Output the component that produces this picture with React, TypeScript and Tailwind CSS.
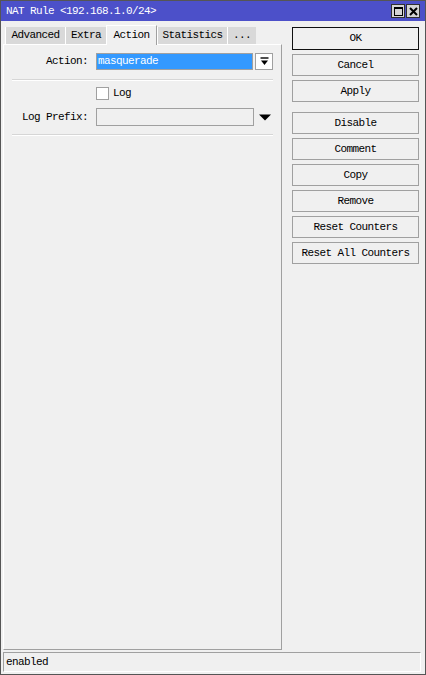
import React from 'react'

const font = "font-['Liberation_Mono','DejaVu_Sans_Mono',monospace] text-[11px] tracking-[-0.6px]"

function Tab({ label, w, active }: { label: string; w: string; active?: boolean }) {
  if (active) {
    return (
      <div className={`${w} h-[20px] flex items-center justify-center bg-[#f0f0f0] border-l border-t border-white border-r border-r-[#a0a0a0] -mb-px relative z-10`}>
        {label}
      </div>
    )
  }
  return (
    <div className={`${w} h-[17px] flex items-center justify-center bg-[#d9d9d9] border-l border-white`}>
      {label}
    </div>
  )
}

function SideButton({ label, primary, className = '' }: { label: string; primary?: boolean; className?: string }) {
  return (
    <div
      className={`${primary ? 'h-[23px]' : 'h-[22px]'} w-full flex items-center justify-center bg-[#f0f0f0] border ${
        primary ? 'border-[#101010]' : 'border-[#a0a0a0]'
      } ${className}`}
    >
      {label}
    </div>
  )
}

export default function App() {
  return (
    <div className={`w-[426px] h-[675px] bg-[#f0f0f0] border border-[#555555] flex flex-col text-black ${font}`}>
      {/* title bar */}
      <div className="h-[20px] bg-[#4c50c9] flex items-center justify-between pl-[5px] pr-[5px] text-white">
        <span className="pt-px">NAT Rule &lt;192.168.1.0/24&gt;</span>
        <div className="flex gap-[1px]">
          <div className="w-[14px] h-[14px] bg-[#d4d4d4] border border-[#303030] flex items-center justify-center">
            <div className="w-[9px] h-[9px] border border-black border-t-2" />
          </div>
          <div className="w-[14px] h-[14px] bg-[#d4d4d4] border border-[#303030] flex items-center justify-center">
            <svg width="9" height="9" viewBox="0 0 9 9">
              <path d="M1 1L8 8M8 1L1 8" stroke="black" strokeWidth="2" />
            </svg>
          </div>
        </div>
      </div>

      <div className="flex flex-1 pl-[2px]">
        {/* left column */}
        <div className="w-[279px] flex flex-col">
          <div className="h-[23px] flex items-end pl-[2px] relative">
            <Tab label="Advanced" w="w-[60px]" />
            <Tab label="Extra" w="w-[41px]" />
            <Tab label="Action" w="w-[51px]" active />
            <Tab label="Statistics" w="w-[70px]" />
            <Tab label="..." w="w-[29px]" />
          </div>
          <div className="flex-1 border-l border-t border-white border-r border-b border-r-[#a0a0a0] border-b-[#a0a0a0] pt-[8px]">
            <div className="flex items-center h-[17px]">
              <div className="w-[84px] text-right">Action:</div>
              <div className="ml-[8px] w-[157px] h-[17px] bg-[#3399ff] border border-[#a0a0a0] text-white flex items-center pl-[1px]">
                masquerade
              </div>
              <div className="ml-[2px] w-[18px] h-[17px] bg-white border border-[#a0a0a0] flex items-center justify-center">
                <svg width="9" height="9" viewBox="0 0 9 9">
                  <path d="M0.5 1H8.5" stroke="black" strokeWidth="1.4" />
                  <path d="M1 3.5H8L4.5 8Z" fill="black" />
                </svg>
              </div>
            </div>
            <div className="mx-[8px] mt-[9px] h-[2px] border-t border-[#d6d6d6] border-b border-b-white" />
            <div className="flex items-center h-[14px] mt-[5px] pl-[92px]">
              <div className="w-[13px] h-[13px] bg-white border border-[#a0a0a0]" />
              <span className="ml-[4px]">Log</span>
            </div>
            <div className="flex items-center h-[18px] mt-[8px]">
              <div className="w-[84px] text-right">Log Prefix:</div>
              <div className="ml-[8px] w-[158px] h-[18px] bg-[#f0f0f0] border border-[#a0a0a0]" />
              <svg className="ml-[5px]" width="12" height="7" viewBox="0 0 12 7">
                <path d="M0 0.5H12L6 6.5Z" fill="black" />
              </svg>
            </div>
            <div className="mx-[8px] mt-[8px] h-[2px] border-t border-[#d6d6d6] border-b border-b-white" />
          </div>
        </div>

        {/* right column */}
        <div className="ml-[10px] w-[127px] pt-[6px] flex flex-col gap-[4px]">
          <SideButton label="OK" primary />
          <SideButton label="Cancel" />
          <SideButton label="Apply" />
          <SideButton label="Disable" className="mt-[6px]" />
          <SideButton label="Comment" />
          <SideButton label="Copy" />
          <SideButton label="Remove" />
          <SideButton label="Reset Counters" />
          <SideButton label="Reset All Counters" />
        </div>
      </div>

      {/* status bar */}
      <div className="mt-[2px] mb-[2px] ml-[2px] mr-[4px] h-[20px] border-l border-t border-[#a0a0a0] border-r border-b border-r-white border-b-white flex items-center pl-[2px]">
        enabled
      </div>
    </div>
  )
}
